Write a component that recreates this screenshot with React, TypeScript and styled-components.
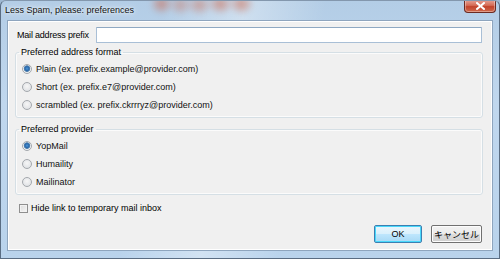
import React from "react";
import styled, { createGlobalStyle } from "styled-components";

const GlobalStyle = createGlobalStyle`
  html, body {
    margin: 0;
    padding: 0;
    background: #9fb9d3;
  }
  * {
    box-sizing: border-box;
  }
`;

const Window = styled.div`
  position: relative;
  width: 500px;
  height: 259px;
  overflow: hidden;
  display: flex;
  flex-direction: column;
  padding: 0 6px 7px 6px;
  border: 1px solid #5a6d83;
  border-top-color: #8397ad;
  border-radius: 6px 6px 0 0;
  background:
    linear-gradient(100deg, rgba(255, 255, 255, 0) 30%, rgba(255, 255, 255, 0.35) 45%, rgba(255, 255, 255, 0) 60%),
    linear-gradient(to bottom, #b3cde6 0%, #c0d7ee 40%, #b9d3ec 100%);
  font-family: "Liberation Sans", Arial, sans-serif;
  color: #000;
`;

// blurred shape of the app behind the glass
const GlassBlur = styled.div`
  position: absolute;
  left: 150px;
  top: -6px;
  width: 105px;
  height: 20px;
  background:
    radial-gradient(ellipse 12px 11px at 10% 45%, rgba(205, 95, 65, 0.55), transparent),
    radial-gradient(ellipse 12px 11px at 28% 50%, rgba(205, 95, 65, 0.4), transparent),
    radial-gradient(ellipse 13px 11px at 46% 50%, rgba(205, 95, 65, 0.45), transparent),
    radial-gradient(ellipse 13px 11px at 66% 45%, rgba(205, 95, 65, 0.55), transparent),
    radial-gradient(ellipse 13px 11px at 86% 45%, rgba(205, 95, 65, 0.55), transparent);
  filter: blur(2.5px);
  pointer-events: none;
`;

const TitleBar = styled.div`
  position: relative;
  height: 19px;
  display: flex;
  align-items: flex-start;
  justify-content: space-between;
`;

const Title = styled.span`
  margin-top: 4px;
  margin-left: -2px;
  font-size: 9px;
  color: #111;
  text-shadow: 0 0 6px rgba(255, 255, 255, 0.9), 0 0 3px rgba(255, 255, 255, 0.9);
`;

const CloseButton = styled.div`
  width: 32px;
  height: 13px;
  margin-top: -1px;
  margin-right: -3px;
  border: 1px solid #6b2a21;
  border-top: none;
  border-radius: 0 0 4px 4px;
  background: linear-gradient(to bottom, #e6a397 0%, #d56b55 45%, #c2422b 55%, #cf6a4c 100%);
  box-shadow: inset 0 0 0 1px rgba(255, 255, 255, 0.35);
  display: flex;
  align-items: center;
  justify-content: center;
`;

const Panel = styled.div`
  flex: 1;
  display: flex;
  flex-direction: column;
  padding: 6px 9px 7px 7px;
  background: #f0f0f0;
  border: 1px solid #8ea5be;
  box-shadow: inset 0 0 0 1px #ffffff;
`;

const PrefixRow = styled.div`
  display: flex;
  align-items: center;
  height: 16px;
`;

const Label = styled.span`
  font-size: 9px;
  margin-left: 2px;
  width: 79px;
  letter-spacing: -0.2px;
`;

const TextInput = styled.div`
  flex: 1;
  height: 16px;
  margin-right: 1px;
  background: #fff;
  border: 1px solid #a9bfd6;
  border-top-color: #8ea8c2;
  border-radius: 1px;
`;

const Group = styled.fieldset<{ $top: number }>`
  margin: ${(p) => p.$top}px 0 0 0;
  padding: 2px 0 3px 0;
  border: 1px solid #d5dfe5;
  border-radius: 3px;
  box-shadow: inset 0 0 0 1px #fbfbfb;
  display: flex;
  flex-direction: column;
`;

const Legend = styled.legend`
  font-size: 9px;
  padding: 0 2px;
  margin-left: 3px;
  line-height: 11px;
`;

const OptionRow = styled.label`
  display: flex;
  align-items: center;
  height: 18px;
  padding-left: 6px;
  font-size: 9px;
  color: #111;
`;

const Radio = styled.span<{ $checked?: boolean }>`
  width: 10px;
  height: 10px;
  margin-right: 4px;
  border-radius: 50%;
  border: 1px solid #a4a8ad;
  background: ${(p) =>
    p.$checked
      ? "radial-gradient(circle at 50% 45%, #4b97d6 0, #2a69ad 2px, #5b87ae 3px, #eef1f4 3.6px, #e3e6ea 100%)"
      : "radial-gradient(circle at 50% 40%, #f6f6f6 0, #e2e4e7 70%, #d6d9dd 100%)"};
`;

const CheckRow = styled.label`
  display: flex;
  align-items: center;
  height: 12px;
  margin-top: 7px;
  padding-left: 4px;
  font-size: 9px;
`;

const CheckBox = styled.span`
  width: 9px;
  height: 9px;
  margin-right: 3px;
  border: 1px solid #8f8f8f;
  background: linear-gradient(135deg, #dcdcdc 0%, #f6f6f6 100%);
  box-shadow: inset 0 0 0 1px #f2f2f2;
`;

const ButtonRow = styled.div`
  margin-top: auto;
  display: flex;
  justify-content: flex-end;
  gap: 9px;
  padding-right: 1px;
`;

const Button = styled.div<{ $default?: boolean; $width: number }>`
  width: ${(p) => p.$width}px;
  height: 18px;
  display: flex;
  align-items: center;
  justify-content: center;
  font-size: 9px;
  border-radius: 2px;
  border: 1px solid ${(p) => (p.$default ? "#3c7fb1" : "#707070")};
  background: ${(p) =>
    p.$default
      ? "linear-gradient(to bottom, #eaf6fd 0%, #d9f0fc 50%, #bee6fd 51%, #a7d9f5 100%)"
      : "linear-gradient(to bottom, #f2f2f2 0%, #ebebeb 50%, #dddddd 51%, #cfcfcf 100%)"};
  box-shadow: inset 0 0 0 1px ${(p) => (p.$default ? "#48d8fb" : "#fcfcfc")};
  font-family: "Liberation Sans", "Noto Sans CJK JP", sans-serif;
`;

const formats = [
  "Plain (ex. prefix.example@provider.com)",
  "Short (ex. prefix.e7@provider.com)",
  "scrambled (ex. prefix.ckrrryz@provider.com)",
];

const providers = ["YopMail", "Humaility", "Mailinator"];

export default function App() {
  return (
    <>
      <GlobalStyle />
      <Window>
        <GlassBlur />
        <TitleBar>
          <Title>Less Spam, please: preferences</Title>
          <CloseButton>
            <svg width="9" height="8" viewBox="0 0 9 8">
              <path
                d="M1 1 L8 7 M8 1 L1 7"
                stroke="#fff"
                strokeWidth="2"
                strokeLinecap="square"
              />
            </svg>
          </CloseButton>
        </TitleBar>
        <Panel>
          <PrefixRow>
            <Label>Mail address prefix</Label>
            <TextInput />
          </PrefixRow>
          <Group $top={4}>
            <Legend>Preferred address format</Legend>
            {formats.map((f, i) => (
              <OptionRow key={f}>
                <Radio $checked={i === 0} />
                {f}
              </OptionRow>
            ))}
          </Group>
          <Group $top={6}>
            <Legend>Preferred provider</Legend>
            {providers.map((f, i) => (
              <OptionRow key={f}>
                <Radio $checked={i === 0} />
                {f}
              </OptionRow>
            ))}
          </Group>
          <CheckRow>
            <CheckBox />
            Hide link to temporary mail inbox
          </CheckRow>
          <ButtonRow>
            <Button $default $width={48}>OK</Button>
            <Button $width={51}>キャンセル</Button>
          </ButtonRow>
        </Panel>
      </Window>
    </>
  );
}
